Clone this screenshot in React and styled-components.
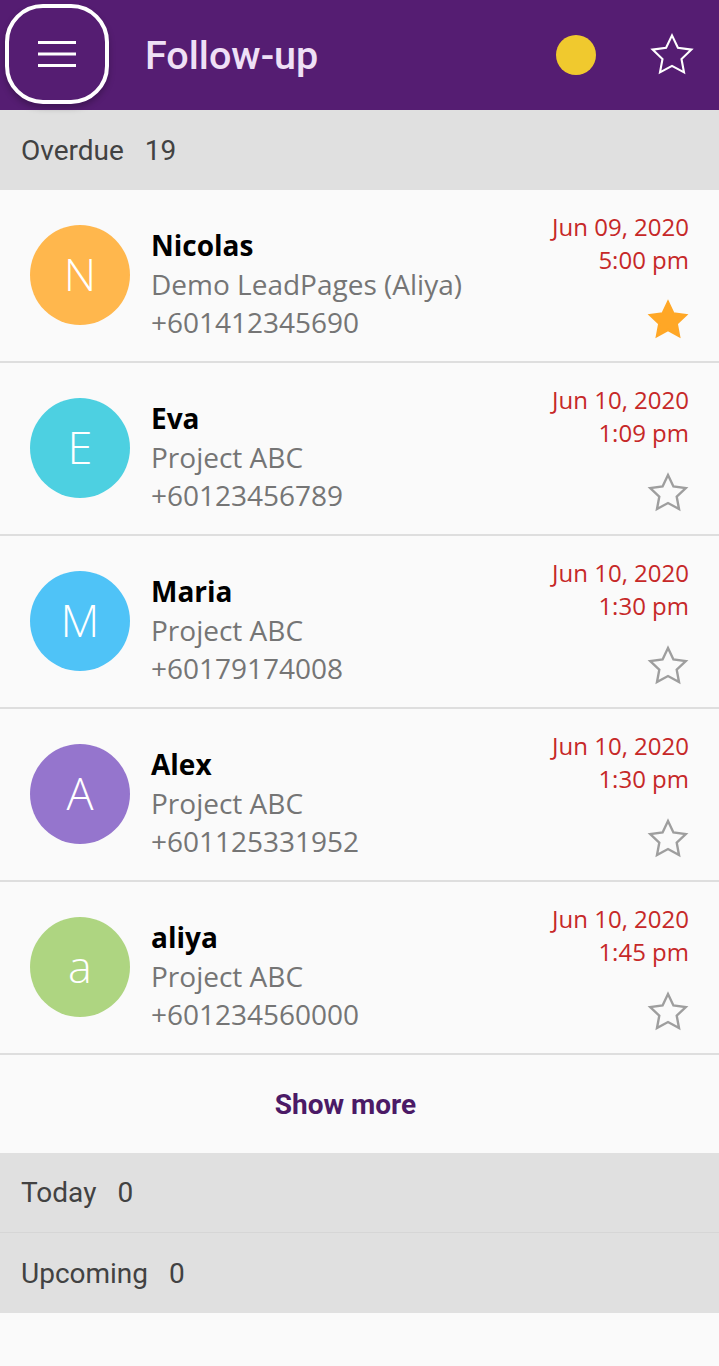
import React from "react";
import styled, { createGlobalStyle } from "styled-components";

const Global = createGlobalStyle`
  html, body { margin: 0; padding: 0; background: #fafafa; }
  body { font-family: "Open Sans", sans-serif; }
  * { box-sizing: border-box; }
`;

const Page = styled.div`
  width: 719px;
  min-height: 1366px;
  background: #fafafa;
`;

const Header = styled.header`
  height: 110px;
  background: #551d72;
  display: flex;
  align-items: center;
  padding: 0 23px 0 5px;
`;

const MenuButton = styled.button`
  width: 104px;
  height: 100px;
  margin-top: -2px;
  border: 4px solid #ffffff;
  border-radius: 38px;
  background: transparent;
  display: flex;
  align-items: center;
  justify-content: center;
  padding: 0;
  box-shadow: 0 4px 6px rgba(0, 0, 0, 0.25);
  cursor: pointer;
`;

const Title = styled.h1`
  margin: 0 0 0 36px;
  flex: 1;
  font-family: Roboto, sans-serif;
  font-weight: 500;
  font-size: 39.5px;
  color: #efe0f6;
`;

const Dot = styled.span`
  width: 40px;
  height: 40px;
  border-radius: 50%;
  background: #f0c92e;
  margin-right: 52px;
`;

const SectionHead = styled.div`
  height: 80px;
  background: #e0e0e0;
  display: flex;
  align-items: center;
  padding-left: 21px;
  font-family: Roboto, sans-serif;
  font-size: 28px;
  color: #424242;
  border-bottom: ${(p) => (p.$line ? "1px solid #d6d6d6" : "none")};
  span + span { margin-left: 21px; }
`;

const Row = styled.div`
  height: 173px;
  border-bottom: 2px solid #dedede;
  display: flex;
  align-items: flex-start;
  padding: 0 30px;
  background: #fafafa;
`;

const Avatar = styled.div`
  width: 100px;
  height: 100px;
  flex: none;
  border-radius: 50%;
  background: ${(p) => p.$bg};
  color: #fff;
  margin-top: 35px;
  display: flex;
  align-items: center;
  justify-content: center;
  font-family: "Open Sans", sans-serif;
  font-weight: 300;
  font-size: 45px;
  padding-bottom: 4px;
`;

const Info = styled.div`
  flex: 1;
  margin-left: 21px;
  padding-top: 36px;
  display: flex;
  flex-direction: column;
`;

const Name = styled.div`
  font-weight: 700;
  font-size: 28px;
  line-height: 39px;
  color: #000;
`;

const Sub = styled.div`
  font-size: 28px;
  line-height: 38px;
  color: #757575;
`;

const Right = styled.div`
  display: flex;
  flex-direction: column;
  align-items: flex-end;
  padding-top: 20px;
`;

const DateLine = styled.div`
  font-size: 24px;
  line-height: 33px;
  color: #c62828;
  text-align: right;
`;

const StarWrap = styled.div`
  margin-top: 22px;
  margin-right: -1px;
  display: flex;
`;

const ShowMore = styled.button`
  width: 100%;
  height: 98px;
  border: none;
  background: #fafafa;
  font-family: Roboto, sans-serif;
  font-weight: 700;
  font-size: 28px;
  color: #4b1a66;
  padding: 0 28px 0 0;
  cursor: pointer;
`;

const starPath =
  "M12 2.2l2.95 6.2 6.75.9-4.95 4.7 1.25 6.7L12 17.45 5.999 20.7l1.25-6.7L2.3 9.3l6.75-.9L12 2.2z";

const Star = ({ size = 44, filled, color, stroke = 1.3 }) => (
  <svg width={size} height={size} viewBox="0 0 24 24">
    <path
      d={starPath}
      fill={filled ? color : "none"}
      stroke={color}
      strokeWidth={stroke}
      strokeLinejoin="miter"
    />
  </svg>
);

const Hamburger = () => (
  <svg width="38" height="28" viewBox="0 0 38 28">
    <rect x="0" y="1" width="38" height="3" fill="#fff" />
    <rect x="0" y="12.5" width="38" height="3" fill="#fff" />
    <rect x="0" y="24" width="38" height="3" fill="#fff" />
  </svg>
);

const items = [
  { l: "N", c: "#ffb74d", name: "Nicolas", sub: "Demo LeadPages (Aliya)", phone: "+601412345690", d: "Jun 09, 2020", t: "5:00 pm", fav: true },
  { l: "E", c: "#4dd0e1", name: "Eva", sub: "Project ABC", phone: "+60123456789", d: "Jun 10, 2020", t: "1:09 pm" },
  { l: "M", c: "#4fc3f7", name: "Maria", sub: "Project ABC", phone: "+60179174008", d: "Jun 10, 2020", t: "1:30 pm" },
  { l: "A", c: "#9575cd", name: "Alex", sub: "Project ABC", phone: "+601125331952", d: "Jun 10, 2020", t: "1:30 pm" },
  { l: "a", c: "#aed581", name: "aliya", sub: "Project ABC", phone: "+601234560000", d: "Jun 10, 2020", t: "1:45 pm" },
];

export default function App() {
  return (
    <Page>
      <Global />
      <Header>
        <MenuButton aria-label="menu">
          <Hamburger />
        </MenuButton>
        <Title>Follow-up</Title>
        <Dot />
        <Star size={48} color="#ffffff" stroke={1.05} />
      </Header>
      <SectionHead>
        <span>Overdue</span>
        <span>19</span>
      </SectionHead>
      {items.map((it) => (
        <Row key={it.name}>
          <Avatar $bg={it.c}>{it.l}</Avatar>
          <Info>
            <Name>{it.name}</Name>
            <Sub>{it.sub}</Sub>
            <Sub>{it.phone}</Sub>
          </Info>
          <Right>
            <DateLine>{it.d}</DateLine>
            <DateLine>{it.t}</DateLine>
            <StarWrap>
              {it.fav ? (
                <Star filled color="#ffa726" />
              ) : (
                <Star color="#9e9e9e" />
              )}
            </StarWrap>
          </Right>
        </Row>
      ))}
      <ShowMore>Show more</ShowMore>
      <SectionHead $line>
        <span>Today</span>
        <span>0</span>
      </SectionHead>
      <SectionHead>
        <span>Upcoming</span>
        <span>0</span>
      </SectionHead>
    </Page>
  );
}
